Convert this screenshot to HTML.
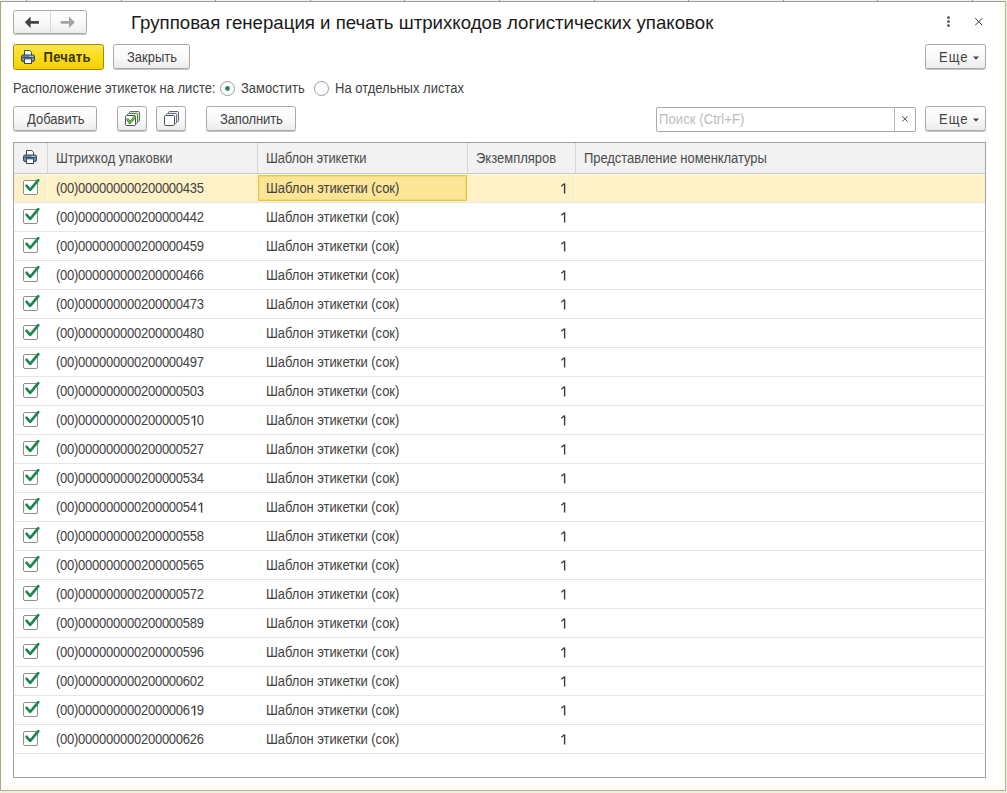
<!DOCTYPE html>
<html><head><meta charset="utf-8">
<style>
*{box-sizing:border-box}
html,body{margin:0;padding:0}
body{width:1007px;height:793px;position:relative;overflow:hidden;background:#fff;font-family:"Liberation Sans",sans-serif;font-size:13px;line-height:15px;color:#424242}
.a{position:absolute}
.t{position:absolute;white-space:nowrap;transform:scaleY(1.1);transform-origin:0 12px}
.frame-top{left:0;top:1px;width:1006px;height:1px;background:#9d9d98}
.tint-l{left:1px;top:2px;width:3px;height:788px;background:linear-gradient(90deg,#fbfbe3,#fefef6 60%,#fff)}
.tint-r{left:1000px;top:2px;width:5px;height:788px;background:linear-gradient(90deg,#fff,#fefef5 40%,#fdfde8)}
.tint-b{left:1px;top:784px;width:1004px;height:6px;background:linear-gradient(#fff,#fdfdf3 50%,#fcfce6)}
.top0{left:0;top:0;width:1007px;height:1px;background:#f3f3ee}
.frame-left{left:0;top:1px;width:1px;height:790px;background:#a9a78c}
.frame-right{left:1005px;top:1px;width:1px;height:790px;background:#b5b39c}
.frame-bottom{left:0;top:790px;width:1006px;height:1px;background:#b0ae95}
.below{left:0;top:791px;width:1007px;height:2px;background:#efede0}
.rightout{left:1006px;top:0;width:1px;height:793px;background:#f1ece0}
.tick{top:0;width:1px;height:1px;background:#999}
.btn{position:absolute;border:1px solid #a9a9a9;border-radius:2.5px;background:linear-gradient(#fefefe,#fafafa 50%,#ececec);box-shadow:0 1px 0 #c4c4c4}
.title{left:131px;top:11.5px;font-size:18.66px;line-height:22px;color:#1a1a1a;transform:none}
.tbl{left:13px;top:142px;width:973px;height:636px;border:1px solid #a0a0a6;background:#fff;overflow:hidden}
.hdr{left:0;top:0;width:971px;height:31px;background:#f2f2f2;border-bottom:1px solid #cbcac2}
.hcol{top:0;height:30px;width:1px;background:#d4d4d4}
.row{position:absolute;left:0;width:971px;height:29px;border-bottom:1px solid #e6e6e6}
.row .cb{position:absolute;left:9px;top:6px;width:15px;height:15px;border:1px solid #8e8e8e;border-radius:2px;background:#fff}
.row .ck{position:absolute;left:9px;top:4px}
.row .c1{left:42px;top:7px;letter-spacing:-0.25px}
.row .c2{left:252px;top:7px;letter-spacing:-0.07px}
.d1{position:relative;color:transparent}
.d1 svg{position:absolute;left:0;top:2.9px;transform:scaleY(0.91);transform-origin:0 0}
.row .one{position:absolute;left:546px;top:9px}
.rg{position:absolute;top:0;width:1px;height:28px;background:#fffaea}
.row.sel{background:#fdf1c7;box-shadow:inset 0 1px 0 #fffbea}
.selcell{position:absolute;left:244px;top:1px;width:209px;height:26px;border:1px solid #e8c64a;box-shadow:inset 0 0 0 1px #f4db74;background:#fbe596}
.hd{top:8px;color:#4c4c4c}
</style></head><body>
<div class="a top0"></div>
<div class="a tint-l"></div>
<div class="a tint-r"></div>
<div class="a tint-b"></div>
<div class="a frame-top"></div>
<div class="a tick" style="left:26px"></div>
<div class="a tick" style="left:121px"></div>
<div class="a tick" style="left:215px"></div>
<div class="a tick" style="left:310px"></div>
<div class="a tick" style="left:404px"></div>
<div class="a tick" style="left:499px"></div>
<div class="a tick" style="left:594px"></div>
<div class="a tick" style="left:688px"></div>
<div class="a tick" style="left:783px"></div>
<div class="a tick" style="left:877px"></div>
<div class="a tick" style="left:972px"></div>
<div class="a frame-left"></div>
<div class="a frame-right"></div>
<div class="a frame-bottom"></div>
<div class="a below"></div>
<div class="a rightout"></div>

<div class="btn" style="left:13px;top:10px;width:74px;height:24px"></div>
<div class="a" style="left:50px;top:11px;width:1px;height:22px;background:#d8d8d8"></div>
<svg class="a" style="left:0;top:0" width="100" height="40" viewBox="0 0 100 40"><path d="M24.8 22.3 L30.6 16.6 V21 H38.9 V23.7 H30.6 V28 Z" fill="#424242"/><path d="M74.8 22.3 L69 16.6 V21 H60.7 V23.7 H69 V28 Z" fill="#a3a3a3"/></svg>

<div class="t title">Групповая генерация и печать штрихкодов логистических упаковок</div>

<div class="a" style="left:946.5px;top:16px;width:3px;height:3px;border-radius:50%;background:#666"></div>
<div class="a" style="left:946.5px;top:20px;width:3px;height:3px;border-radius:50%;background:#666"></div>
<div class="a" style="left:946.5px;top:24px;width:3px;height:3px;border-radius:50%;background:#666"></div>
<svg class="a" style="left:974px;top:17px" width="10" height="10" viewBox="0 0 10 10"><path d="M1.2 1.2 L8.3 8.3 M8.3 1.2 L1.2 8.3" stroke="#3c3c3c" stroke-width="1"/></svg>

<div class="a" style="left:13px;top:44px;width:91px;height:26px;border:1px solid #a08c0c;border-radius:2.5px;background:linear-gradient(#fce54e,#f8dc1c 50%,#f3d000)"></div>
<svg width="15" height="15" viewBox="0 0 15 15" style="position:absolute;left:21px;top:50px"><path d="M3.5 5.5 V0.5 H8.8 L10.5 2.2 V5.5" fill="#fff" stroke="#34495b" stroke-width="1"/><rect x="0.5" y="5" width="13" height="6.5" rx="1.6" fill="#7592aa" stroke="#2c4153" stroke-width="1"/><path d="M1.5 7.3 H12.5" stroke="#2c4153" stroke-width="1"/><rect x="8.6" y="5.8" width="1.4" height="1" fill="#dfe8ef"/><rect x="10.6" y="5.8" width="1.4" height="1" fill="#dfe8ef"/><rect x="3.5" y="8.8" width="7" height="4.7" fill="#fff" stroke="#34495b" stroke-width="1"/></svg>
<div class="t" style="left:43.5px;top:50px;font-weight:bold;color:#3c3300;letter-spacing:0.3px">Печать</div>
<div class="btn" style="left:113px;top:44px;width:77px;height:25px"></div>
<div class="t" style="left:127px;top:50px">Закрыть</div>
<div class="btn" style="left:925px;top:44px;width:61px;height:25px"></div>
<div class="t" style="left:939px;top:50px;letter-spacing:1px">Еще</div>
<svg class="a" style="left:972px;top:56px" width="8" height="5" viewBox="0 0 8 5"><path d="M1 0.5 H7 L4 3.8 Z" fill="#444"/></svg>

<div class="t" style="left:13px;top:81px">Расположение этикеток на листе:</div>
<svg class="a" style="left:219px;top:80px" width="17" height="17" viewBox="0 0 17 17"><circle cx="8.5" cy="8.5" r="7" fill="#fff" stroke="#9b9b9b" stroke-width="1"/><circle cx="8.5" cy="8.5" r="2.4" fill="#1f8a55"/></svg>
<div class="t" style="left:241px;top:81px">Замостить</div>
<svg class="a" style="left:313px;top:80px" width="17" height="17" viewBox="0 0 17 17"><circle cx="8.5" cy="8.5" r="7" fill="#fff" stroke="#9b9b9b" stroke-width="1"/></svg>
<div class="t" style="left:335px;top:81px">На отдельных листах</div>

<div class="btn" style="left:13px;top:106px;width:84px;height:25px"></div>
<div class="t" style="left:27px;top:112px">Добавить</div>
<div class="btn" style="left:117px;top:106px;width:30px;height:25px"></div>
<div class="btn" style="left:156px;top:106px;width:30px;height:25px"></div>
<svg class="a" style="left:124px;top:110px" width="17" height="17" viewBox="0 0 17 17"><rect x="5.5" y="1.5" width="10" height="10" rx="1" fill="#cfe3c8" stroke="#56705a"/><rect x="3.5" y="3.5" width="10" height="10" rx="1" fill="#e2efdc" stroke="#627a66"/><rect x="1.5" y="5.5" width="10" height="10" rx="1.2" fill="#fff" stroke="#4b5359"/><path d="M3.6 9.6 L5.9 12.6 L10.8 7.2" fill="none" stroke="#3d8a2b" stroke-width="2.6" stroke-linecap="round" stroke-linejoin="round"/><path d="M3.6 9.6 L5.9 12.6 L10.8 7.2" fill="none" stroke="#8fdc5e" stroke-width="1" stroke-linecap="round" stroke-linejoin="round"/></svg>
<svg class="a" style="left:163px;top:110px" width="17" height="17" viewBox="0 0 17 17"><rect x="5.5" y="1.5" width="10" height="10" rx="1" fill="#e3ebf2" stroke="#58626b"/><rect x="3.5" y="3.5" width="10" height="10" rx="1" fill="#eef3f7" stroke="#6a737b"/><rect x="1.5" y="5.5" width="10" height="10" rx="1.2" fill="#fff" stroke="#4b5359"/></svg>
<div class="btn" style="left:206px;top:106px;width:90px;height:25px"></div>
<div class="t" style="left:220px;top:112px;letter-spacing:-0.12px">Заполнить</div>
<div class="a" style="left:656px;top:107px;width:260px;height:25px;border:1px solid #a9a9a9;border-radius:2px;background:#fff"></div>
<div class="a" style="left:894px;top:108px;width:1px;height:23px;background:#b5b5b5"></div>
<svg class="a" style="left:901px;top:115px" width="8" height="8" viewBox="0 0 8 8"><path d="M1.2 1.2 L6.6 6.6 M6.6 1.2 L1.2 6.6" stroke="#505050" stroke-width="1"/></svg>
<div class="t" style="left:659px;top:112px;color:#bcbcbc;letter-spacing:0.1px">Поиск (Ctrl+F)</div>
<div class="btn" style="left:925px;top:106px;width:61px;height:25px"></div>
<div class="t" style="left:939px;top:112px;letter-spacing:1px">Еще</div>
<svg class="a" style="left:972px;top:118px" width="8" height="5" viewBox="0 0 8 5"><path d="M1 0.5 H7 L4 3.8 Z" fill="#444"/></svg>

<div class="a tbl">
  <div class="a hdr"></div>
  <div class="a hcol" style="left:33px"></div>
  <div class="a hcol" style="left:243px"></div>
  <div class="a hcol" style="left:453px"></div>
  <div class="a hcol" style="left:561px"></div>
  <svg width="15" height="15" viewBox="0 0 15 15" style="position:absolute;left:9px;top:7px"><path d="M3.5 5.5 V0.5 H8.8 L10.5 2.2 V5.5" fill="#fff" stroke="#34495b" stroke-width="1"/><rect x="0.5" y="5" width="13" height="6.5" rx="1.6" fill="#7592aa" stroke="#2c4153" stroke-width="1"/><path d="M1.5 7.3 H12.5" stroke="#2c4153" stroke-width="1"/><rect x="8.6" y="5.8" width="1.4" height="1" fill="#dfe8ef"/><rect x="10.6" y="5.8" width="1.4" height="1" fill="#dfe8ef"/><rect x="3.5" y="8.8" width="7" height="4.7" fill="#fff" stroke="#34495b" stroke-width="1"/></svg>
  <span class="t hd" style="left:42px">Штрихкод упаковки</span>
  <span class="t hd" style="left:252px;letter-spacing:-0.17px">Шаблон этикетки</span>
  <span class="t hd" style="left:462px">Экземпляров</span>
  <span class="t hd" style="left:570px;letter-spacing:-0.07px">Представление номенклатуры</span>
<div class="row sel" style="top:31px"><div class="rg" style="left:33px"></div><div class="rg" style="left:561px"></div><div class="selcell"></div><span class="cb"></span><svg class="ck" width="20" height="18" viewBox="0 0 20 18"><path d="M3.6 7.8 L7.2 11.8 L15.3 2.2" fill="none" stroke="#1c8650" stroke-width="2.7" stroke-linecap="round" stroke-linejoin="round"/></svg><span class="t c1">(00)000000000200000435</span><span class="t c2">Шаблон этикетки (сок)</span><svg class="one" width="8" height="12" viewBox="0 0 8 12"><path d="M4.6 0.5 V10.5" stroke="#3a3a3a" stroke-width="1.4"/><path d="M4.4 0.8 L1.3 3.3" stroke="#3a3a3a" stroke-width="1.2"/></svg></div>
<div class="row" style="top:60px"><span class="cb"></span><svg class="ck" width="20" height="18" viewBox="0 0 20 18"><path d="M3.6 7.8 L7.2 11.8 L15.3 2.2" fill="none" stroke="#1c8650" stroke-width="2.7" stroke-linecap="round" stroke-linejoin="round"/></svg><span class="t c1">(00)000000000200000442</span><span class="t c2">Шаблон этикетки (сок)</span><svg class="one" width="8" height="12" viewBox="0 0 8 12"><path d="M4.6 0.5 V10.5" stroke="#3a3a3a" stroke-width="1.4"/><path d="M4.4 0.8 L1.3 3.3" stroke="#3a3a3a" stroke-width="1.2"/></svg></div>
<div class="row" style="top:89px"><span class="cb"></span><svg class="ck" width="20" height="18" viewBox="0 0 20 18"><path d="M3.6 7.8 L7.2 11.8 L15.3 2.2" fill="none" stroke="#1c8650" stroke-width="2.7" stroke-linecap="round" stroke-linejoin="round"/></svg><span class="t c1">(00)000000000200000459</span><span class="t c2">Шаблон этикетки (сок)</span><svg class="one" width="8" height="12" viewBox="0 0 8 12"><path d="M4.6 0.5 V10.5" stroke="#3a3a3a" stroke-width="1.4"/><path d="M4.4 0.8 L1.3 3.3" stroke="#3a3a3a" stroke-width="1.2"/></svg></div>
<div class="row" style="top:118px"><span class="cb"></span><svg class="ck" width="20" height="18" viewBox="0 0 20 18"><path d="M3.6 7.8 L7.2 11.8 L15.3 2.2" fill="none" stroke="#1c8650" stroke-width="2.7" stroke-linecap="round" stroke-linejoin="round"/></svg><span class="t c1">(00)000000000200000466</span><span class="t c2">Шаблон этикетки (сок)</span><svg class="one" width="8" height="12" viewBox="0 0 8 12"><path d="M4.6 0.5 V10.5" stroke="#3a3a3a" stroke-width="1.4"/><path d="M4.4 0.8 L1.3 3.3" stroke="#3a3a3a" stroke-width="1.2"/></svg></div>
<div class="row" style="top:147px"><span class="cb"></span><svg class="ck" width="20" height="18" viewBox="0 0 20 18"><path d="M3.6 7.8 L7.2 11.8 L15.3 2.2" fill="none" stroke="#1c8650" stroke-width="2.7" stroke-linecap="round" stroke-linejoin="round"/></svg><span class="t c1">(00)000000000200000473</span><span class="t c2">Шаблон этикетки (сок)</span><svg class="one" width="8" height="12" viewBox="0 0 8 12"><path d="M4.6 0.5 V10.5" stroke="#3a3a3a" stroke-width="1.4"/><path d="M4.4 0.8 L1.3 3.3" stroke="#3a3a3a" stroke-width="1.2"/></svg></div>
<div class="row" style="top:176px"><span class="cb"></span><svg class="ck" width="20" height="18" viewBox="0 0 20 18"><path d="M3.6 7.8 L7.2 11.8 L15.3 2.2" fill="none" stroke="#1c8650" stroke-width="2.7" stroke-linecap="round" stroke-linejoin="round"/></svg><span class="t c1">(00)000000000200000480</span><span class="t c2">Шаблон этикетки (сок)</span><svg class="one" width="8" height="12" viewBox="0 0 8 12"><path d="M4.6 0.5 V10.5" stroke="#3a3a3a" stroke-width="1.4"/><path d="M4.4 0.8 L1.3 3.3" stroke="#3a3a3a" stroke-width="1.2"/></svg></div>
<div class="row" style="top:205px"><span class="cb"></span><svg class="ck" width="20" height="18" viewBox="0 0 20 18"><path d="M3.6 7.8 L7.2 11.8 L15.3 2.2" fill="none" stroke="#1c8650" stroke-width="2.7" stroke-linecap="round" stroke-linejoin="round"/></svg><span class="t c1">(00)000000000200000497</span><span class="t c2">Шаблон этикетки (сок)</span><svg class="one" width="8" height="12" viewBox="0 0 8 12"><path d="M4.6 0.5 V10.5" stroke="#3a3a3a" stroke-width="1.4"/><path d="M4.4 0.8 L1.3 3.3" stroke="#3a3a3a" stroke-width="1.2"/></svg></div>
<div class="row" style="top:234px"><span class="cb"></span><svg class="ck" width="20" height="18" viewBox="0 0 20 18"><path d="M3.6 7.8 L7.2 11.8 L15.3 2.2" fill="none" stroke="#1c8650" stroke-width="2.7" stroke-linecap="round" stroke-linejoin="round"/></svg><span class="t c1">(00)000000000200000503</span><span class="t c2">Шаблон этикетки (сок)</span><svg class="one" width="8" height="12" viewBox="0 0 8 12"><path d="M4.6 0.5 V10.5" stroke="#3a3a3a" stroke-width="1.4"/><path d="M4.4 0.8 L1.3 3.3" stroke="#3a3a3a" stroke-width="1.2"/></svg></div>
<div class="row" style="top:263px"><span class="cb"></span><svg class="ck" width="20" height="18" viewBox="0 0 20 18"><path d="M3.6 7.8 L7.2 11.8 L15.3 2.2" fill="none" stroke="#1c8650" stroke-width="2.7" stroke-linecap="round" stroke-linejoin="round"/></svg><span class="t c1">(00)0000000002000005<span class="d1">1<svg width="8" height="12" viewBox="0 0 8 12"><path d="M4.6 0.5 V10.5" stroke="#3a3a3a" stroke-width="1.4"/><path d="M4.4 0.8 L1.3 3.3" stroke="#3a3a3a" stroke-width="1.2"/></svg></span>0</span><span class="t c2">Шаблон этикетки (сок)</span><svg class="one" width="8" height="12" viewBox="0 0 8 12"><path d="M4.6 0.5 V10.5" stroke="#3a3a3a" stroke-width="1.4"/><path d="M4.4 0.8 L1.3 3.3" stroke="#3a3a3a" stroke-width="1.2"/></svg></div>
<div class="row" style="top:292px"><span class="cb"></span><svg class="ck" width="20" height="18" viewBox="0 0 20 18"><path d="M3.6 7.8 L7.2 11.8 L15.3 2.2" fill="none" stroke="#1c8650" stroke-width="2.7" stroke-linecap="round" stroke-linejoin="round"/></svg><span class="t c1">(00)000000000200000527</span><span class="t c2">Шаблон этикетки (сок)</span><svg class="one" width="8" height="12" viewBox="0 0 8 12"><path d="M4.6 0.5 V10.5" stroke="#3a3a3a" stroke-width="1.4"/><path d="M4.4 0.8 L1.3 3.3" stroke="#3a3a3a" stroke-width="1.2"/></svg></div>
<div class="row" style="top:321px"><span class="cb"></span><svg class="ck" width="20" height="18" viewBox="0 0 20 18"><path d="M3.6 7.8 L7.2 11.8 L15.3 2.2" fill="none" stroke="#1c8650" stroke-width="2.7" stroke-linecap="round" stroke-linejoin="round"/></svg><span class="t c1">(00)000000000200000534</span><span class="t c2">Шаблон этикетки (сок)</span><svg class="one" width="8" height="12" viewBox="0 0 8 12"><path d="M4.6 0.5 V10.5" stroke="#3a3a3a" stroke-width="1.4"/><path d="M4.4 0.8 L1.3 3.3" stroke="#3a3a3a" stroke-width="1.2"/></svg></div>
<div class="row" style="top:350px"><span class="cb"></span><svg class="ck" width="20" height="18" viewBox="0 0 20 18"><path d="M3.6 7.8 L7.2 11.8 L15.3 2.2" fill="none" stroke="#1c8650" stroke-width="2.7" stroke-linecap="round" stroke-linejoin="round"/></svg><span class="t c1">(00)00000000020000054<span class="d1">1<svg width="8" height="12" viewBox="0 0 8 12"><path d="M4.6 0.5 V10.5" stroke="#3a3a3a" stroke-width="1.4"/><path d="M4.4 0.8 L1.3 3.3" stroke="#3a3a3a" stroke-width="1.2"/></svg></span></span><span class="t c2">Шаблон этикетки (сок)</span><svg class="one" width="8" height="12" viewBox="0 0 8 12"><path d="M4.6 0.5 V10.5" stroke="#3a3a3a" stroke-width="1.4"/><path d="M4.4 0.8 L1.3 3.3" stroke="#3a3a3a" stroke-width="1.2"/></svg></div>
<div class="row" style="top:379px"><span class="cb"></span><svg class="ck" width="20" height="18" viewBox="0 0 20 18"><path d="M3.6 7.8 L7.2 11.8 L15.3 2.2" fill="none" stroke="#1c8650" stroke-width="2.7" stroke-linecap="round" stroke-linejoin="round"/></svg><span class="t c1">(00)000000000200000558</span><span class="t c2">Шаблон этикетки (сок)</span><svg class="one" width="8" height="12" viewBox="0 0 8 12"><path d="M4.6 0.5 V10.5" stroke="#3a3a3a" stroke-width="1.4"/><path d="M4.4 0.8 L1.3 3.3" stroke="#3a3a3a" stroke-width="1.2"/></svg></div>
<div class="row" style="top:408px"><span class="cb"></span><svg class="ck" width="20" height="18" viewBox="0 0 20 18"><path d="M3.6 7.8 L7.2 11.8 L15.3 2.2" fill="none" stroke="#1c8650" stroke-width="2.7" stroke-linecap="round" stroke-linejoin="round"/></svg><span class="t c1">(00)000000000200000565</span><span class="t c2">Шаблон этикетки (сок)</span><svg class="one" width="8" height="12" viewBox="0 0 8 12"><path d="M4.6 0.5 V10.5" stroke="#3a3a3a" stroke-width="1.4"/><path d="M4.4 0.8 L1.3 3.3" stroke="#3a3a3a" stroke-width="1.2"/></svg></div>
<div class="row" style="top:437px"><span class="cb"></span><svg class="ck" width="20" height="18" viewBox="0 0 20 18"><path d="M3.6 7.8 L7.2 11.8 L15.3 2.2" fill="none" stroke="#1c8650" stroke-width="2.7" stroke-linecap="round" stroke-linejoin="round"/></svg><span class="t c1">(00)000000000200000572</span><span class="t c2">Шаблон этикетки (сок)</span><svg class="one" width="8" height="12" viewBox="0 0 8 12"><path d="M4.6 0.5 V10.5" stroke="#3a3a3a" stroke-width="1.4"/><path d="M4.4 0.8 L1.3 3.3" stroke="#3a3a3a" stroke-width="1.2"/></svg></div>
<div class="row" style="top:466px"><span class="cb"></span><svg class="ck" width="20" height="18" viewBox="0 0 20 18"><path d="M3.6 7.8 L7.2 11.8 L15.3 2.2" fill="none" stroke="#1c8650" stroke-width="2.7" stroke-linecap="round" stroke-linejoin="round"/></svg><span class="t c1">(00)000000000200000589</span><span class="t c2">Шаблон этикетки (сок)</span><svg class="one" width="8" height="12" viewBox="0 0 8 12"><path d="M4.6 0.5 V10.5" stroke="#3a3a3a" stroke-width="1.4"/><path d="M4.4 0.8 L1.3 3.3" stroke="#3a3a3a" stroke-width="1.2"/></svg></div>
<div class="row" style="top:495px"><span class="cb"></span><svg class="ck" width="20" height="18" viewBox="0 0 20 18"><path d="M3.6 7.8 L7.2 11.8 L15.3 2.2" fill="none" stroke="#1c8650" stroke-width="2.7" stroke-linecap="round" stroke-linejoin="round"/></svg><span class="t c1">(00)000000000200000596</span><span class="t c2">Шаблон этикетки (сок)</span><svg class="one" width="8" height="12" viewBox="0 0 8 12"><path d="M4.6 0.5 V10.5" stroke="#3a3a3a" stroke-width="1.4"/><path d="M4.4 0.8 L1.3 3.3" stroke="#3a3a3a" stroke-width="1.2"/></svg></div>
<div class="row" style="top:524px"><span class="cb"></span><svg class="ck" width="20" height="18" viewBox="0 0 20 18"><path d="M3.6 7.8 L7.2 11.8 L15.3 2.2" fill="none" stroke="#1c8650" stroke-width="2.7" stroke-linecap="round" stroke-linejoin="round"/></svg><span class="t c1">(00)000000000200000602</span><span class="t c2">Шаблон этикетки (сок)</span><svg class="one" width="8" height="12" viewBox="0 0 8 12"><path d="M4.6 0.5 V10.5" stroke="#3a3a3a" stroke-width="1.4"/><path d="M4.4 0.8 L1.3 3.3" stroke="#3a3a3a" stroke-width="1.2"/></svg></div>
<div class="row" style="top:553px"><span class="cb"></span><svg class="ck" width="20" height="18" viewBox="0 0 20 18"><path d="M3.6 7.8 L7.2 11.8 L15.3 2.2" fill="none" stroke="#1c8650" stroke-width="2.7" stroke-linecap="round" stroke-linejoin="round"/></svg><span class="t c1">(00)0000000002000006<span class="d1">1<svg width="8" height="12" viewBox="0 0 8 12"><path d="M4.6 0.5 V10.5" stroke="#3a3a3a" stroke-width="1.4"/><path d="M4.4 0.8 L1.3 3.3" stroke="#3a3a3a" stroke-width="1.2"/></svg></span>9</span><span class="t c2">Шаблон этикетки (сок)</span><svg class="one" width="8" height="12" viewBox="0 0 8 12"><path d="M4.6 0.5 V10.5" stroke="#3a3a3a" stroke-width="1.4"/><path d="M4.4 0.8 L1.3 3.3" stroke="#3a3a3a" stroke-width="1.2"/></svg></div>
<div class="row" style="top:582px"><span class="cb"></span><svg class="ck" width="20" height="18" viewBox="0 0 20 18"><path d="M3.6 7.8 L7.2 11.8 L15.3 2.2" fill="none" stroke="#1c8650" stroke-width="2.7" stroke-linecap="round" stroke-linejoin="round"/></svg><span class="t c1">(00)000000000200000626</span><span class="t c2">Шаблон этикетки (сок)</span><svg class="one" width="8" height="12" viewBox="0 0 8 12"><path d="M4.6 0.5 V10.5" stroke="#3a3a3a" stroke-width="1.4"/><path d="M4.4 0.8 L1.3 3.3" stroke="#3a3a3a" stroke-width="1.2"/></svg></div>
</div>
</body></html>
